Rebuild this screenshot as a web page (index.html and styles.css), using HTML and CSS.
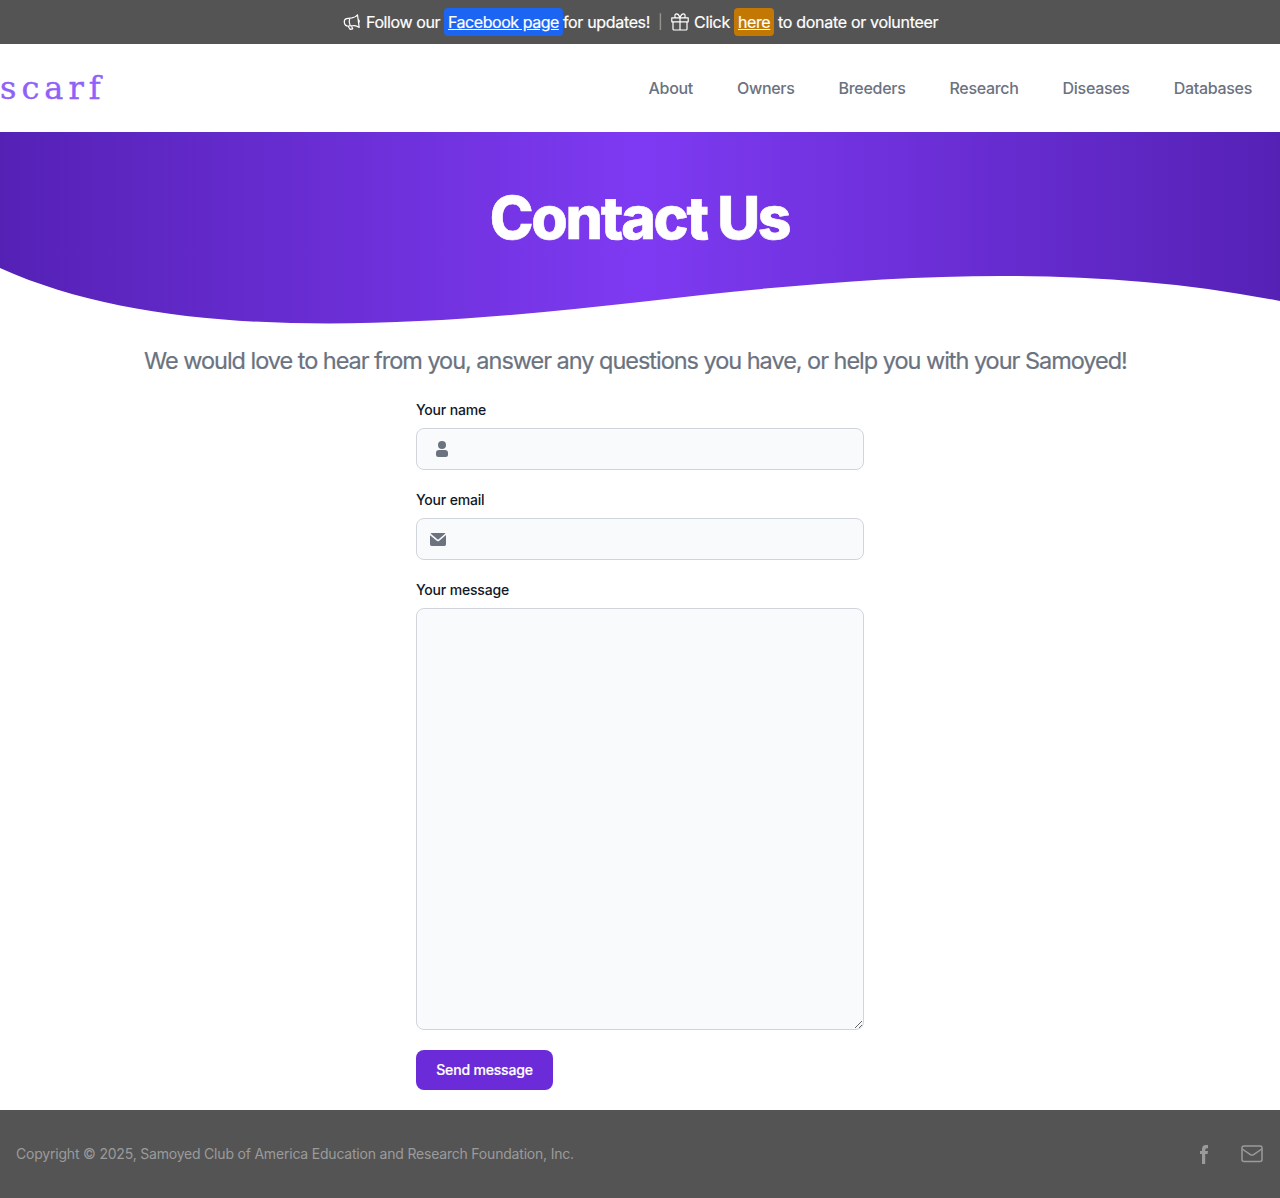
FILE: index.html
```html
<!DOCTYPE html>
<html lang="en">
<head>
<meta charset="utf-8">
<title>Contact Us</title>
<link rel="stylesheet" href="styles.css">
</head>
<body>
<div class="banner">
  <svg class="banner-icon horn" viewBox="0 0 18 18"><path d="M3.600 5.600 9 4.900c2.300-.4 4.200-1.500 5.500-3.100l1.700 12.600c-1.800-1.300-3.800-1.900-5.900-1.700l-5.500.3C2.900 13 1.500 11.300 1.300 9.400 1.100 7.400 2 5.900 3.600 5.600ZM6.600 5.300q-1 3.500.6 7.500M4.900 13l2.300 3.300 2.500-.5-1.400-3M15.200 6.500c1.300.4 1.500 2.500.4 3.100"/></svg>
  <span class="follow">Follow our</span>
  <a class="pill facebook" href="#">Facebook page</a>
  <span class="updates">for updates!</span>
  <span class="divider">|</span>
  <svg class="banner-icon gift" viewBox="0 0 18 18"><path d="M.8 4.800h16.400v4H.8ZM2 8.800V16q0 1 1 1h12q1 0 1-1V8.800M9 4.800V17M9 4.800C7.800 1.200 6.500.7 5.300.9 3.300 1.300 3.500 4.500 5 4.800M9 4.800c1.200-3.600 2.500-4.100 3.700-3.900 2 .4 1.800 3.600.3 3.900"/></svg>
  <span class="click">Click</span>
  <a class="pill donate" href="#">here</a>
  <span class="volunteer">to donate or volunteer</span>
</div>
<header class="header">
  <a class="logo" href="#">scarf</a>
  <nav class="nav">
    <a href="#">About</a><a href="#">Owners</a><a href="#">Breeders</a><a href="#">Research</a><a href="#">Diseases</a><a href="#">Databases</a>
  </nav>
</header>
<section class="hero">
  <h1>Contact Us</h1>
  <svg class="wave" viewBox="0 0 1280 64" preserveAspectRatio="none"><path d="M0 4C170 81 420 63 640 38C853 13 1067-5 1280 37V64H0Z"/></svg>
</section>
<main>
  <p class="lead">We would love to hear from you, answer any questions you have, or help you with your Samoyed!</p>
  <form class="form">
    <label for="name">Your name</label>
    <div class="field name-field">
      <svg viewBox="0 0 14 18"><circle cx="7" cy="5" r="4"/><path d="M4 10h6a3 3 0 0 1 3 3v1.500q0 2.500-2.500 2.500h-7Q1 17 1 14.500V13a3 3 0 0 1 3-3Z"/></svg>
      <input id="name" type="text">
    </div>
    <label for="email">Your email</label>
    <div class="field email-field">
      <svg viewBox="0 0 20 16"><path d="m10.036 8.278 9.258-7.790A1.979 1.979 0 0 0 18 0H2A1.987 1.987 0 0 0 .641.541l9.395 7.737Z"/><path d="M11.241 9.817c-.36.275-.801.425-1.255.427-.428 0-.845-.138-1.187-.395L0 2.600V14a2 2 0 0 0 2 2h16a2 2 0 0 0 2-2V2.500l-8.759 7.317Z"/></svg>
      <input id="email" type="email">
    </div>
    <label for="message">Your message</label>
    <textarea id="message"></textarea>
    <button type="button">Send message</button>
  </form>
</main>
<footer class="footer">
  <p>Copyright © 2025, Samoyed Club of America Education and Research Foundation, Inc.</p>
  <div class="social">
    <svg class="fb" viewBox="0 0 8 19"><path d="M8 0v3.200H6.700Q5.200 3.200 5.200 4.800V6H8l-.4 3H5.200v10H2V9H0V6h2V4.300Q2 0 6 0Z"/></svg>
    <svg class="mail" viewBox="0 0 22 18"><rect x="1" y="1" width="20" height="15.500" rx="2"/><path d="M1.200 4 9.400 9.600q1.600 1 3.200 0L20.800 4"/></svg>
  </div>
</footer>
</body>
</html>
```
FILE: styles.css
```css
* { box-sizing: border-box; }
body { margin: 0; background: #fff; font: 400 16px/24px Inter, sans-serif; color: #111827; }
h1, p { margin: 0; }
a { color: inherit; text-decoration: none; }
.banner { height: 44px; display: flex; align-items: center; background: #545454; color: #fff; padding-left: 343px; white-space: nowrap; }
.banner span, .banner a { flex: none; }
.banner-icon { flex: none; width: 18px; height: 18px; fill: none; stroke: #fff; stroke-width: 1.200; stroke-linejoin: round; }
.follow { width: 78px; margin-left: 5px; letter-spacing: -.4px; -webkit-text-stroke: .2px; }
.pill { height: 28px; line-height: 28px; padding: 0 4px; border-radius: 4px; text-decoration: underline; -webkit-text-stroke: .2px; }
.facebook { width: 119px; background: #1c64f2; letter-spacing: -.46px; }
.updates { width: 95px; letter-spacing: -.34px; -webkit-text-stroke: .2px; }
.divider { width: 13px; color: #9ca3af; font-size: 14px; }
.click { width: 40px; margin-left: 5px; letter-spacing: -.3px; -webkit-text-stroke: .2px; }
.donate { width: 40px; background: #c27803; letter-spacing: -.4px; }
.volunteer { margin-left: 4px; letter-spacing: -.3px; -webkit-text-stroke: .2px; }
.header { height: 88px; display: flex; justify-content: space-between; align-items: center; padding-right: 28px; }
.logo { font: 400 32px/40px "DejaVu Serif", serif; letter-spacing: 5px; color: #9061f9; -webkit-text-stroke: .4px; }
.nav { display: flex; gap: 44px; font-weight: 500; color: #6b7280; letter-spacing: -.3px; }
.hero { height: 196px; display: flex; flex-direction: column; justify-content: space-between; background: linear-gradient(90deg, #5521b5, #7e3af2 50%, #5521b5); }
h1 { padding-top: 56px; text-align: center; font-size: 59px; line-height: 60px; font-weight: 800; letter-spacing: -2.300px; text-indent: -1px; color: #fff; -webkit-text-stroke: .6px; }
.wave { display: block; width: 100%; height: 64px; fill: #fff; }
.lead { margin-top: 17px; height: 32px; padding-left: 144px; font-size: 23.5px; line-height: 32px; color: #6b7280; letter-spacing: -1.030px; white-space: nowrap; -webkit-text-stroke: .2px; }
.form { width: 448px; margin: 23px auto 20px; display: flex; flex-direction: column; }
label { font-size: 14px; line-height: 20px; font-weight: 500; margin-bottom: 8px; letter-spacing: -.18px; }
.field, textarea { border: 1px solid #d1d5db; border-radius: 8px; background: #f9fafb; margin: 0 0 20px; }
.field { height: 42px; display: flex; align-items: center; }
.field svg { flex: none; fill: #6b7280; }
.name-field svg { width: 14px; height: 18px; margin-left: 18px; }
.email-field svg { width: 16px; height: 13px; margin-left: 13px; }
input { flex: 1; min-width: 0; margin-left: 8px; border: 0; background: transparent; outline: 0; }
textarea { display: block; width: 100%; height: 422px; resize: vertical; }
button { width: 137px; height: 40px; padding: 0; border: 0; border-radius: 8px; background: #6c2bd9; color: #fff; font: 500 14px/20px Inter, sans-serif; letter-spacing: -.18px; -webkit-text-stroke: .2px; }
.footer { height: 88px; padding: 0 17px 0 16px; display: flex; align-items: center; justify-content: space-between; background: #545454; color: #9b9b9b; font-size: 14px; line-height: 20px; letter-spacing: -.2px; }
.social { display: flex; align-items: center; gap: 33px; }
.fb { width: 8px; height: 19px; fill: #9b9b9b; }
.mail { width: 22px; height: 18px; fill: none; stroke: #9b9b9b; stroke-width: 1.500; }
```
